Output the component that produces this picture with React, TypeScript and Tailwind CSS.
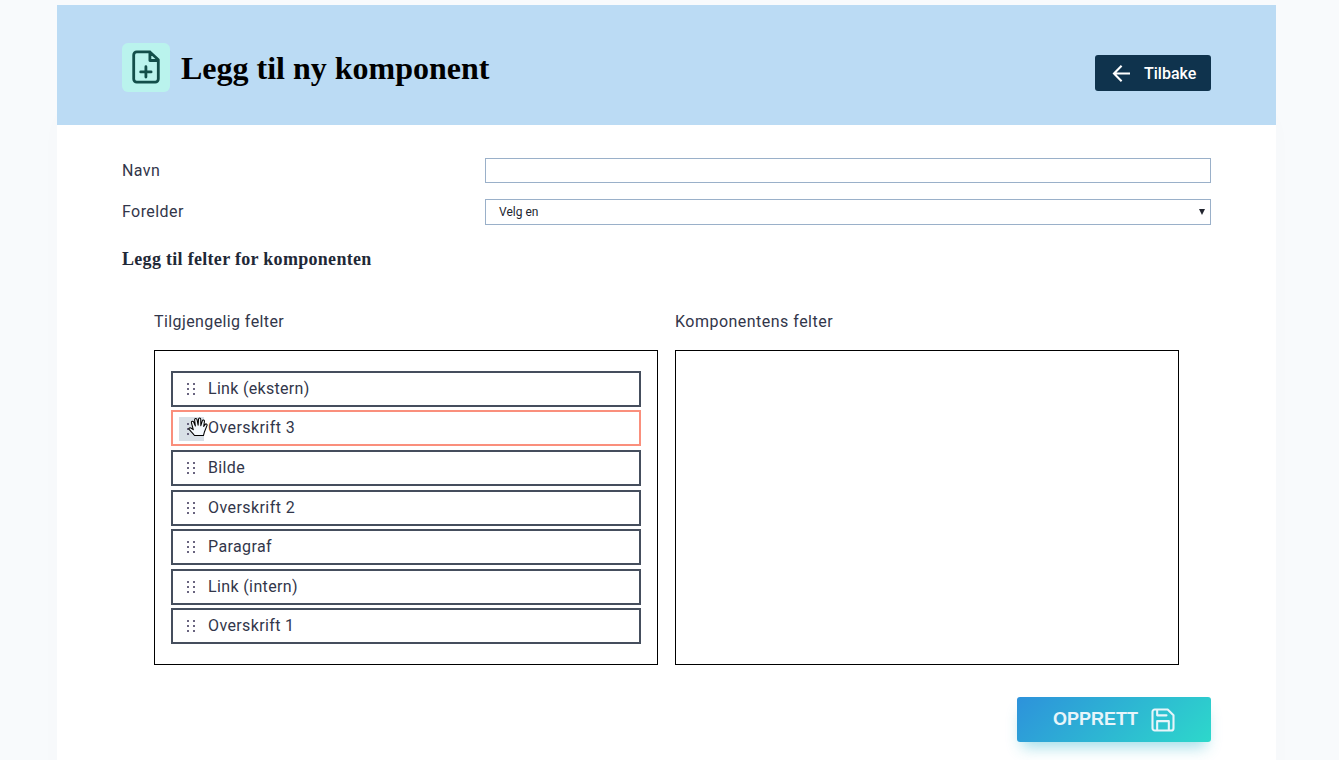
import React from "react";

const fields = [
  { name: "Link (ekstern)", spacing: "tracking-[0.3px]" },
  { name: "Overskrift 3", spacing: "tracking-[0.43px]" },
  { name: "Bilde", spacing: "tracking-[0.35px]" },
  { name: "Overskrift 2", spacing: "tracking-[0.43px]" },
  { name: "Paragraf", spacing: "tracking-[0.4px]" },
  { name: "Link (intern)", spacing: "tracking-[0.37px]" },
  { name: "Overskrift 1", spacing: "tracking-[0.37px]" },
];

function Grip() {
  return (
    <svg className="block h-3.5 w-3" viewBox="0 0 12 14" fill="#6a6580" shapeRendering="crispEdges">
      {[1, 6, 11].map((y) => (
        <React.Fragment key={y}>
          <rect x="1" y={y} width="2" height="2" />
          <rect x="7" y={y} width="2" height="2" />
        </React.Fragment>
      ))}
    </svg>
  );
}

function HandCursor() {
  return (
    <svg className="absolute left-[9px] top-0 h-[20px] w-[20px]" viewBox="0 0 19 19" fill="#f4f9fd" stroke="#000" strokeWidth="1" strokeLinejoin="round" strokeLinecap="round">
      <path d="M6.2 17.6 C4.8 15.5 3 14 1.2 12 C.4 11 1.4 9.7 2.7 10.4 L5 12 L3.3 5.6 C3 4 4.7 3.5 5.4 4.8 L7 8.5 L6.3 2.9 C6.2 1.2 8.2 1 8.6 2.6 L9.6 7.8 L10 2 C10.2.5 12 .6 12.1 2.1 L12.2 8.2 L13.6 3.7 C14.1 2.3 15.8 2.8 15.6 4.3 L14.9 9 L16.3 7 C17.2 5.9 18.5 6.9 18 8.2 L15.6 14.2 L14.7 17.6 Z" />
    </svg>
  );
}

export default function App() {
  return (
    <div className="h-[760px] overflow-hidden bg-[#f8fafc] px-[57px] pt-[5px] font-['Roboto','Liberation_Sans',sans-serif] text-base text-[#32364a]">
      <main className="h-[1000px] w-[1219px] bg-white shadow-[0_100px_40px_rgba(0,0,0,0.01)]">
        <header className="flex h-[120px] items-start justify-between bg-[#bbdbf4] pl-[65px] pr-[65px]">
          <div className="flex items-start pt-[38px]">
            <div className="flex h-[49px] w-12 items-start justify-center rounded-md bg-[#baf3ed] pt-1">
              <svg className="size-10" viewBox="0 0 40 40" fill="none" stroke="#134e4a" strokeWidth="2.8" strokeLinecap="round" strokeLinejoin="round">
                <path d="M23.9 4.9H10.7a3 3 0 0 0-3 3V32.1a3 3 0 0 0 3 3H29.3a3 3 0 0 0 3-3V12.8L23.9 4.9V13.5H32.3M19.9 19.7V30.1M14.7 24.9H25.1" />
              </svg>
            </div>
            <h1 className="ml-[11px] whitespace-nowrap font-['Liberation_Serif',serif] text-[32px] leading-[50px] font-bold text-black">Legg til ny komponent</h1>
          </div>
          <button className="mt-[50px] flex h-9 w-[116px] items-center rounded-[3px] bg-[#0f334d] pl-[17px] text-white">
            <svg className="size-[18px]" viewBox="0 0 18 18" fill="none" stroke="currentColor" strokeWidth="2.1">
              <path d="M18 9.5H2M9.6 1.8L2 9.5L9.6 17.2" />
            </svg>
            <span className="ml-3.5 pt-0.5 font-medium">Tilbake</span>
          </button>
        </header>
        <section className="px-[65px] pt-[33px]">
          <div className="flex h-[25px] items-center">
            <label className="w-[363px] tracking-[0.4px]">Navn</label>
            <div className="h-[25px] w-[726px] border border-[#9ab0c9]" />
          </div>
          <div className="mt-4 flex h-[26px] items-center">
            <label className="w-[363px] tracking-[0.43px]">Forelder</label>
            <div className="flex h-[26px] w-[726px] items-center justify-between border border-[#9ab0c9] pl-[13px] pr-[5px] text-xs text-[#22252f]">
              <span>Velg en</span>
              <svg className="h-[6px] w-[6px]" viewBox="0 0 6 6"><path d="M0 0H6L3 6Z" fill="#22252f" /></svg>
            </div>
          </div>
          <h2 className="mt-5 whitespace-nowrap font-['Liberation_Serif',serif] text-[18px] leading-7 font-bold tracking-[0.3px] text-[#1f2937]">Legg til felter for komponenten</h2>
          <div className="mt-9 flex gap-[17px] pl-8">
            <div>
              <h3 className="h-[41px] leading-[26px] tracking-[0.4px]">Tilgjengelig felter</h3>
              <div className="flex h-[315px] w-[504px] flex-col gap-[3.6px] border border-black px-4 pt-[19.8px]">
                {fields.map((f, i) => (
                  <div key={f.name} className={`flex h-9 shrink-0 items-center border-2 pl-1.5 ${i === 1 ? "border-[#fa8f7c]" : "border-[#454e5d]"}`}>
                    <span className={`relative flex h-6 w-[25px] items-center pl-[7px] ${i === 1 ? "mt-px bg-[#d8e0e7]" : ""}`}>
                      <Grip />
                      {i === 1 && <HandCursor />}
                    </span>
                    <span className={`ml-1 whitespace-nowrap ${f.spacing}`}>{f.name}</span>
                  </div>
                ))}
              </div>
            </div>
            <div>
              <h3 className="h-[41px] leading-[26px] tracking-[0.48px]">Komponentens felter</h3>
              <div className="h-[315px] w-[504px] border border-black" />
            </div>
          </div>
          <div className="mt-8 flex justify-end">
            <button className="flex h-[45px] w-[194px] items-center rounded-[3px] bg-linear-[135deg,#2d92db,#2dd8cb] pl-9 text-[#e7f5fa] shadow-[0_10px_15px_-5px_rgba(45,180,205,0.45)]">
              <span className="font-['Liberation_Sans',sans-serif] text-[18px] font-bold">OPPRETT</span>
              <svg className="ml-[11px] size-7" viewBox="0 0 24 24" fill="none" stroke="currentColor" strokeWidth="1.8" strokeLinecap="round" strokeLinejoin="round">
                <path d="M17 21v-8H7v8M7 3v5h8M19 21H5a2 2 0 0 1-2-2V5a2 2 0 0 1 2-2h11l5 5v11a2 2 0 0 1-2 2z" />
              </svg>
            </button>
          </div>
        </section>
      </main>
    </div>
  );
}
